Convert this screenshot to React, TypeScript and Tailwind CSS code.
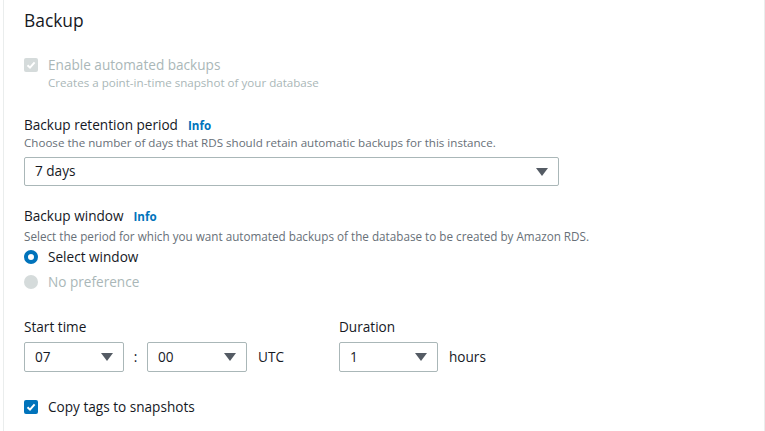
import React from "react";

const Tri = () => (
  <svg width="12" height="8" viewBox="0 0 12 8" className="shrink-0">
    <path d="M0 0 H12 L6 8 Z" fill="#545b64" />
  </svg>
);

const Check = ({ bg }: { bg: string }) => (
  <span className="flex h-[14px] w-[14px] shrink-0 items-center justify-center rounded-[2px]" style={{ background: bg }}>
    <svg width="10" height="10" viewBox="0 0 10 10">
      <path d="M1.5 5.2 L4 7.6 L8.6 2.4" fill="none" stroke="#fff" strokeWidth="2" />
    </svg>
  </span>
);

const Select = ({ value, w, h }: { value: string; w: string; h: string }) => (
  <div className={`flex items-center justify-between rounded-[2px] border border-[#aab7b8] bg-white pl-[10px] pr-[10px] ${w} ${h}`}>
    <span className="text-[13.6px] text-[#16191f]">{value}</span>
    <Tri />
  </div>
);

export default function App() {
  return (
    <div className="h-[431px] w-[765px] bg-white" style={{ fontFamily: '"Open Sans", sans-serif' }}>
      <div className="ml-[3px] flex h-[431px] w-[762px] flex-col border-l border-r border-[#eaeded] pl-[20px] text-[#16191f]">
        <div className="mt-[8px] h-[24px] text-[17.4px] leading-[24px]">Backup</div>

        <div className="mt-[23px] flex h-[20px] items-center gap-[10px]">
          <Check bg="#d5dbdb" />
          <span className="text-[13.6px] leading-[20px] text-[#aab7b8]">Enable automated backups</span>
        </div>
        <div className="ml-[24px] text-[11.6px] leading-[16px] text-[#aab7b8]">Creates a point-in-time snapshot of your database</div>

        <div className="mt-[24px] flex items-baseline gap-[10px] text-[13.6px] leading-[20px]">
          <span>Backup retention period</span>
          <span className="text-[11.6px] font-bold text-[#0073bb]">Info</span>
        </div>
        <div className="text-[11.6px] leading-[14px] text-[#687078]">Choose the number of days that RDS should retain automatic backups for this instance.</div>
        <div className="mt-[7px]">
          <Select value="7 days" w="w-[535px]" h="h-[29px]" />
        </div>

        <div className="mt-[20px] flex items-baseline gap-[10px] text-[13.6px] leading-[20px]">
          <span>Backup window</span>
          <span className="text-[11.6px] font-bold text-[#0073bb]">Info</span>
        </div>
        <div className="mt-[1px] text-[11.7px] leading-[16px] text-[#687078]">Select the period for which you want automated backups of the database to be created by Amazon RDS.</div>

        <div className="mt-[3px] flex h-[20px] items-center gap-[10px]">
          <span className="h-[14px] w-[14px] shrink-0 rounded-full border-[4px] border-[#0073bb] bg-white" />
          <span className="text-[13.6px] leading-[20px]">Select window</span>
        </div>
        <div className="mt-[5px] flex h-[20px] items-center gap-[10px]">
          <span className="h-[14px] w-[14px] shrink-0 rounded-full bg-[#d5dbdb]" />
          <span className="text-[13.6px] leading-[20px] text-[#aab7b8]">No preference</span>
        </div>

        <div className="mt-[25px] flex">
          <div className="w-[315px]">
            <div className="text-[13.6px] leading-[20px]">Start time</div>
            <div className="mt-[5px] flex items-center">
              <Select value="07" w="w-[100px]" h="h-[30px]" />
              <span className="w-[23px] text-center text-[13.6px]">:</span>
              <Select value="00" w="w-[100px]" h="h-[30px]" />
              <span className="ml-[11px] text-[13.6px]">UTC</span>
            </div>
          </div>
          <div>
            <div className="text-[13.6px] leading-[20px]">Duration</div>
            <div className="mt-[5px] flex items-center">
              <Select value="1" w="w-[99px]" h="h-[30px]" />
              <span className="ml-[11px] text-[13.6px]">hours</span>
            </div>
          </div>
        </div>

        <div className="mt-[25px] flex h-[20px] items-center gap-[10px]">
          <Check bg="#0073bb" />
          <span className="text-[13.6px] leading-[20px]">Copy tags to snapshots</span>
        </div>
      </div>
    </div>
  );
}
